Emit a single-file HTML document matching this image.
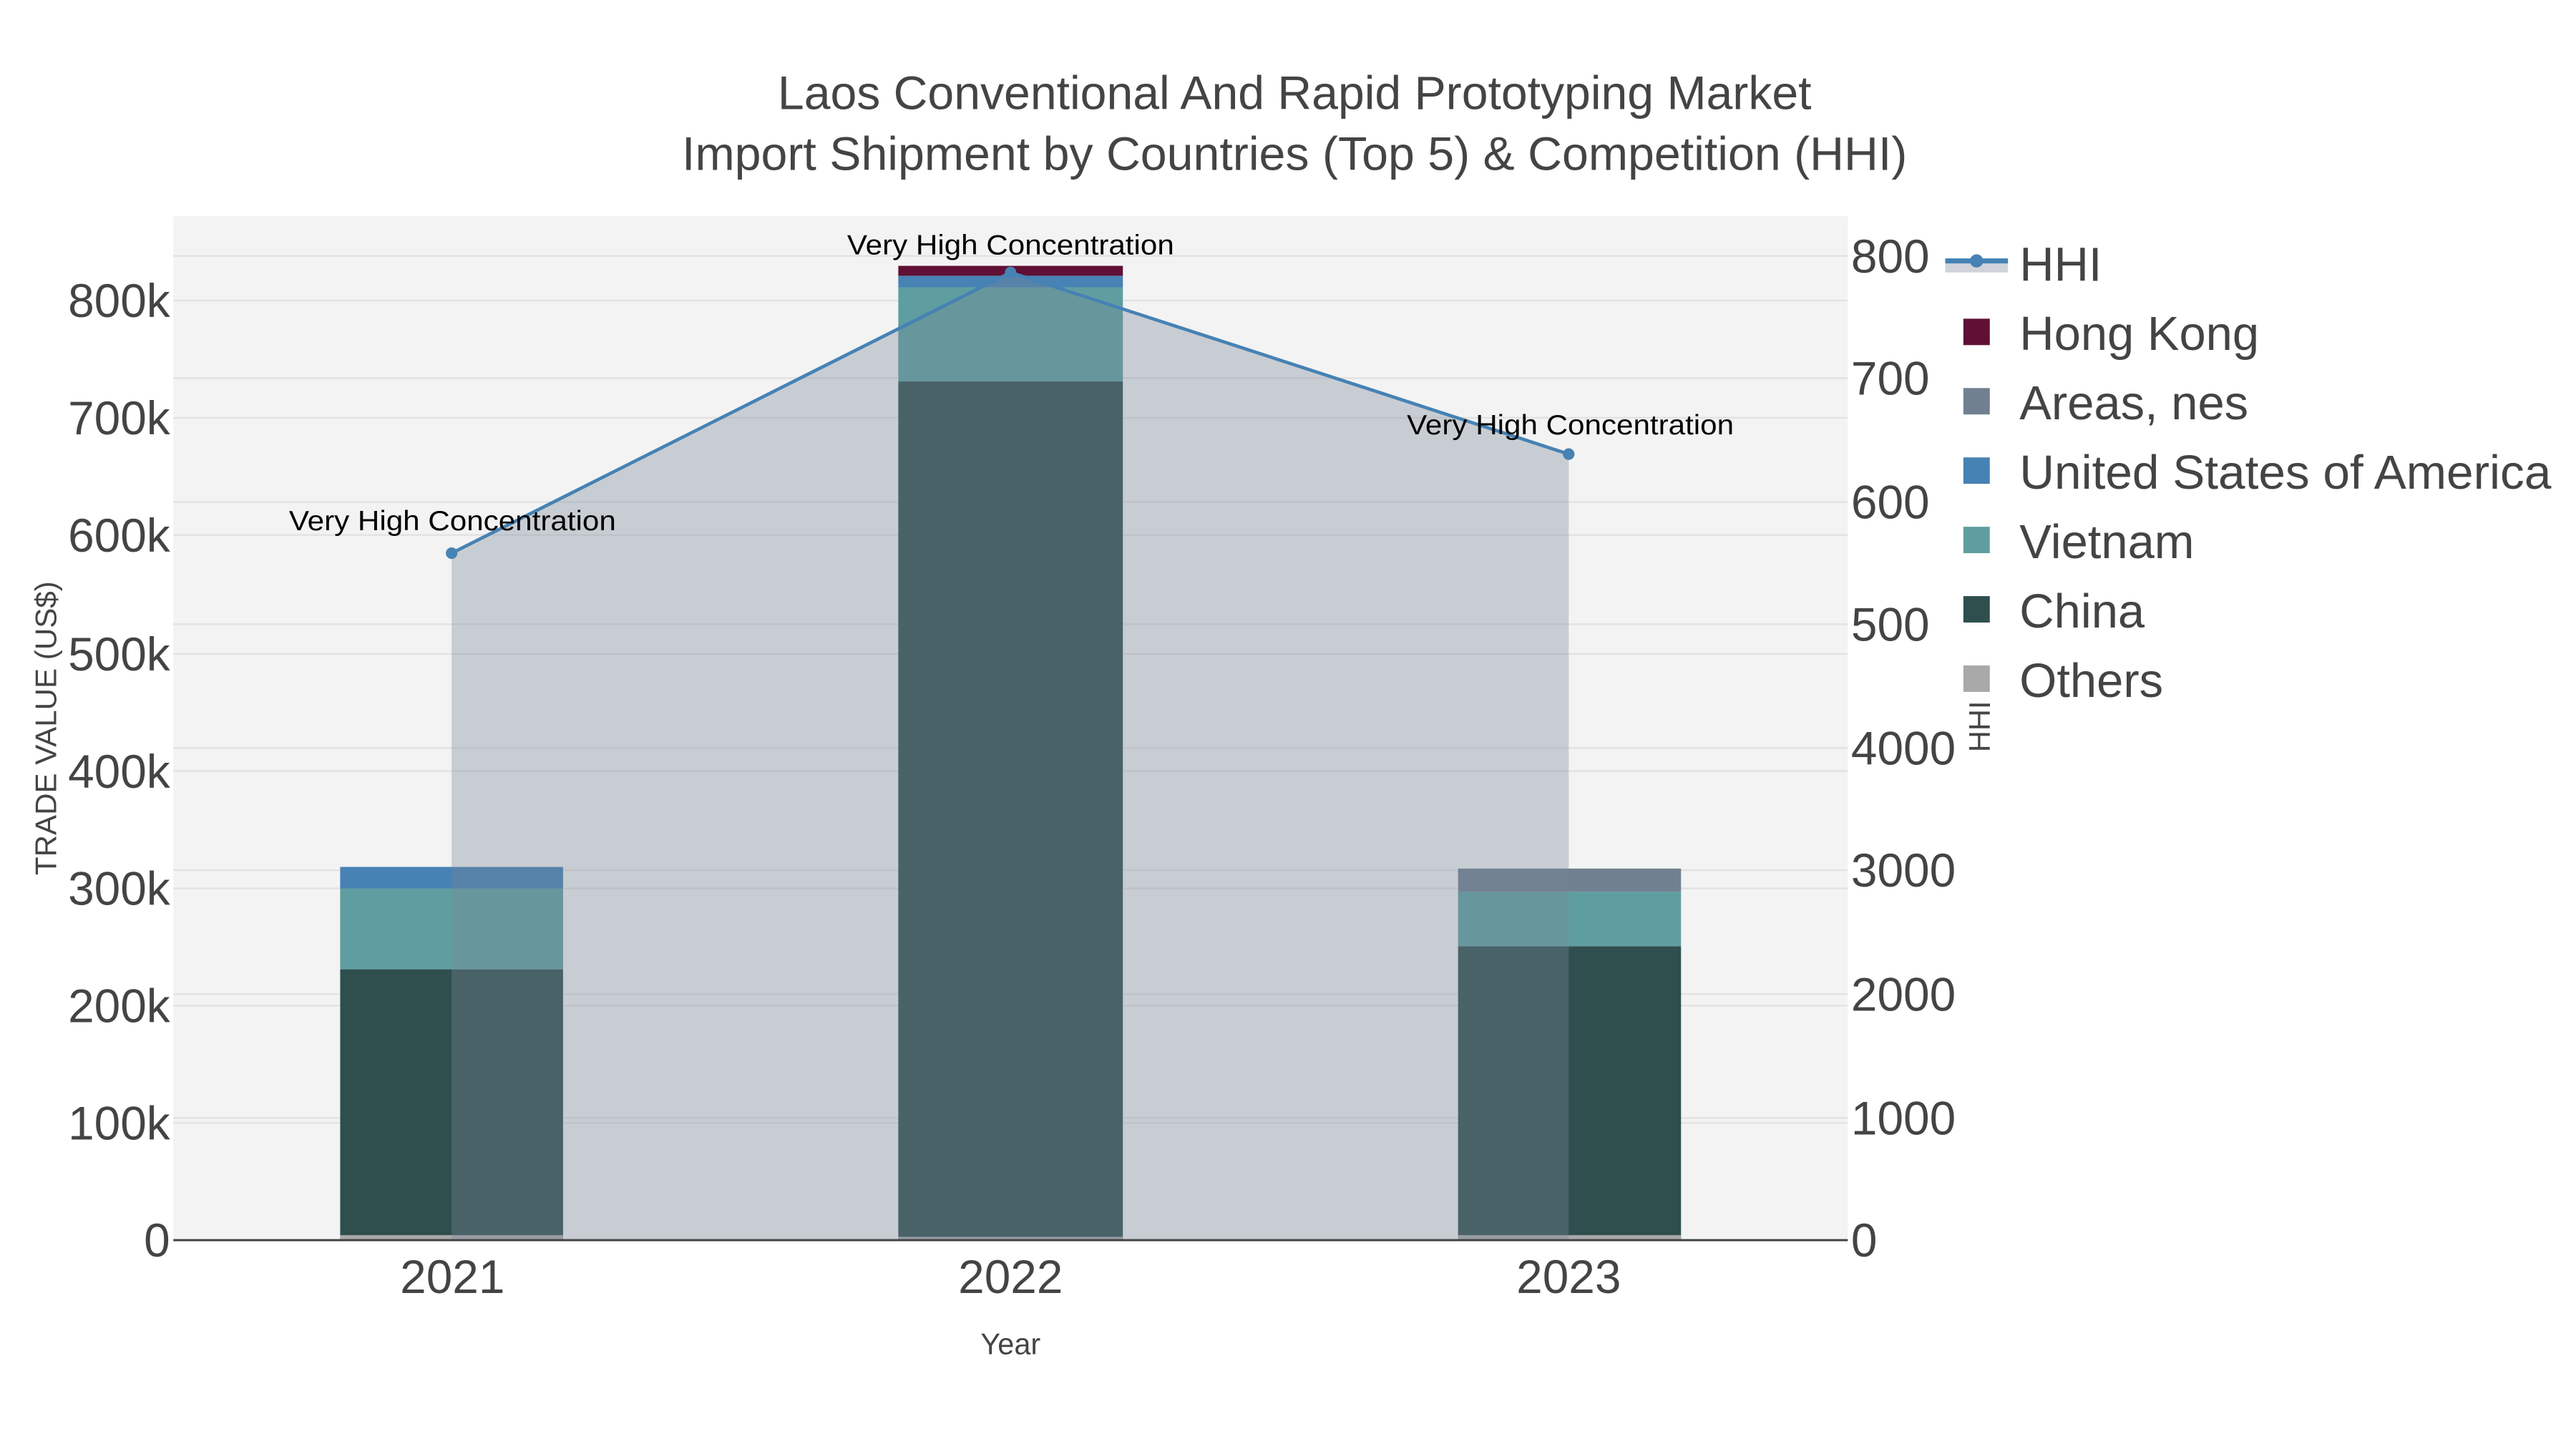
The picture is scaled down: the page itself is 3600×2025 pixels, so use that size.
<!DOCTYPE html>
<html><head><meta charset="utf-8"><style>
html,body{margin:0;padding:0;background:#fff;}
svg{display:block;font-family:"Liberation Sans",Arial,sans-serif;}
</style></head><body>
<svg width="3600" height="2025" viewBox="0 0 1560 877.5" xmlns="http://www.w3.org/2000/svg">
<rect width="1560" height="877.5" fill="#fff"/>
<rect x="105" y="131" width="1014" height="620" fill="#f3f3f3"/>
<g stroke="#e2e2e2" stroke-width="1">
<line x1="105" x2="1119" y1="182" y2="182"/><line x1="105" x2="1119" y1="253" y2="253"/>
<line x1="105" x2="1119" y1="324" y2="324"/><line x1="105" x2="1119" y1="396" y2="396"/>
<line x1="105" x2="1119" y1="467" y2="467"/><line x1="105" x2="1119" y1="538" y2="538"/>
<line x1="105" x2="1119" y1="609" y2="609"/><line x1="105" x2="1119" y1="680" y2="680"/>
<line x1="105" x2="1119" y1="155" y2="155"/><line x1="105" x2="1119" y1="229" y2="229"/>
<line x1="105" x2="1119" y1="304" y2="304"/><line x1="105" x2="1119" y1="378" y2="378"/>
<line x1="105" x2="1119" y1="453" y2="453"/><line x1="105" x2="1119" y1="527" y2="527"/>
<line x1="105" x2="1119" y1="602" y2="602"/><line x1="105" x2="1119" y1="677" y2="677"/>
</g>
<g>
<rect x="206" y="587" width="135" height="164" fill="#2f4f4f"/>
<rect x="206" y="538" width="135" height="49" fill="#5f9ea0"/>
<rect x="206" y="525" width="135" height="13" fill="#4682b4"/>
<rect x="206" y="748" width="135" height="3" fill="#a9a9a9"/>
<rect x="544" y="231" width="136" height="520" fill="#2f4f4f"/>
<rect x="544" y="174" width="136" height="57" fill="#5f9ea0"/>
<rect x="544" y="167" width="136" height="7" fill="#4682b4"/>
<rect x="544" y="161" width="136" height="6" fill="#5f1034"/>
<rect x="544" y="749" width="136" height="2" fill="#a9a9a9"/>
<rect x="883" y="573" width="135" height="178" fill="#2f4f4f"/>
<rect x="883" y="540" width="135" height="33" fill="#5f9ea0"/>
<rect x="883" y="526" width="135" height="14" fill="#708090"/>
<rect x="883" y="748" width="135" height="3" fill="#a9a9a9"/>
</g>
<polygon points="273.5,335 612,165 950,275 950,751 273.5,751" fill="rgba(119,136,153,0.35)"/>
<polyline points="273.5,335 612,165 950,275" fill="none" stroke="#4682b4" stroke-width="2"/>
<circle cx="273.5" cy="335" r="3.5" fill="#4682b4"/><circle cx="612" cy="165" r="3.5" fill="#4682b4"/><circle cx="950" cy="275" r="3.5" fill="#4682b4"/>
<line x1="105" x2="1119" y1="751" y2="751" stroke="#444" stroke-width="1.3"/>
<g font-size="17" fill="#000" text-anchor="middle">
<text x="274" y="321" textLength="198" lengthAdjust="spacingAndGlyphs">Very High Concentration</text>
<text x="612" y="154" textLength="198" lengthAdjust="spacingAndGlyphs">Very High Concentration</text>
<text x="951" y="263" textLength="198" lengthAdjust="spacingAndGlyphs">Very High Concentration</text>
</g>
<g font-size="28.5" fill="#444" text-anchor="middle">
<text x="784" y="66" textLength="626" lengthAdjust="spacingAndGlyphs">Laos Conventional And Rapid Prototyping Market</text>
<text x="784" y="103" textLength="742" lengthAdjust="spacingAndGlyphs">Import Shipment by Countries (Top 5) &amp; Competition (HHI)</text>
</g>
<g font-size="28.5" fill="#444" text-anchor="end">
<text x="103" y="192">800k</text><text x="103" y="263">700k</text><text x="103" y="334">600k</text>
<text x="103" y="406">500k</text><text x="103" y="477">400k</text><text x="103" y="548">300k</text>
<text x="103" y="619">200k</text><text x="103" y="690">100k</text><text x="103" y="761">0</text>
</g>
<g font-size="28.5" fill="#444" text-anchor="start">
<text x="1121" y="165">800</text><text x="1121" y="239">700</text><text x="1121" y="314">600</text>
<text x="1121" y="388">500</text><text x="1121" y="463">4000</text><text x="1121" y="537">3000</text>
<text x="1121" y="612">2000</text><text x="1121" y="687">1000</text><text x="1121" y="761">0</text>
</g>
<g font-size="28.5" fill="#444" text-anchor="middle">
<text x="274" y="783">2021</text><text x="612" y="783">2022</text><text x="950" y="783">2023</text>
</g>
<text x="612" y="820" font-size="18" fill="#444" text-anchor="middle">Year</text>
<text transform="translate(34,441) rotate(-90)" font-size="18" fill="#444" text-anchor="middle" textLength="178" lengthAdjust="spacingAndGlyphs">TRADE VALUE (US$)</text>
<text transform="translate(1205,440) rotate(-90)" font-size="18" fill="#444" text-anchor="middle">HHI</text>
<rect x="1178" y="158" width="38" height="7" fill="#d0d4da"/>
<line x1="1178" x2="1216" y1="158" y2="158" stroke="#4682b4" stroke-width="3"/>
<circle cx="1197" cy="158" r="4" fill="#4682b4"/>
<rect x="1189" y="193" width="16" height="16" fill="#5f1034"/>
<rect x="1189" y="235" width="16" height="16" fill="#708090"/>
<rect x="1189" y="277" width="16" height="16" fill="#4682b4"/>
<rect x="1189" y="319" width="16" height="16" fill="#5f9ea0"/>
<rect x="1189" y="361" width="16" height="16" fill="#2f4f4f"/>
<rect x="1189" y="403" width="16" height="16" fill="#a9a9a9"/>
<g font-size="29" fill="#444">
<text x="1223" y="170">HHI</text>
<text x="1223" y="212">Hong Kong</text>
<text x="1223" y="254">Areas, nes</text>
<text x="1223" y="296" textLength="322" lengthAdjust="spacingAndGlyphs">United States of America</text>
<text x="1223" y="338">Vietnam</text>
<text x="1223" y="380">China</text>
<text x="1223" y="422">Others</text>
</g>
</svg>
</body></html>
